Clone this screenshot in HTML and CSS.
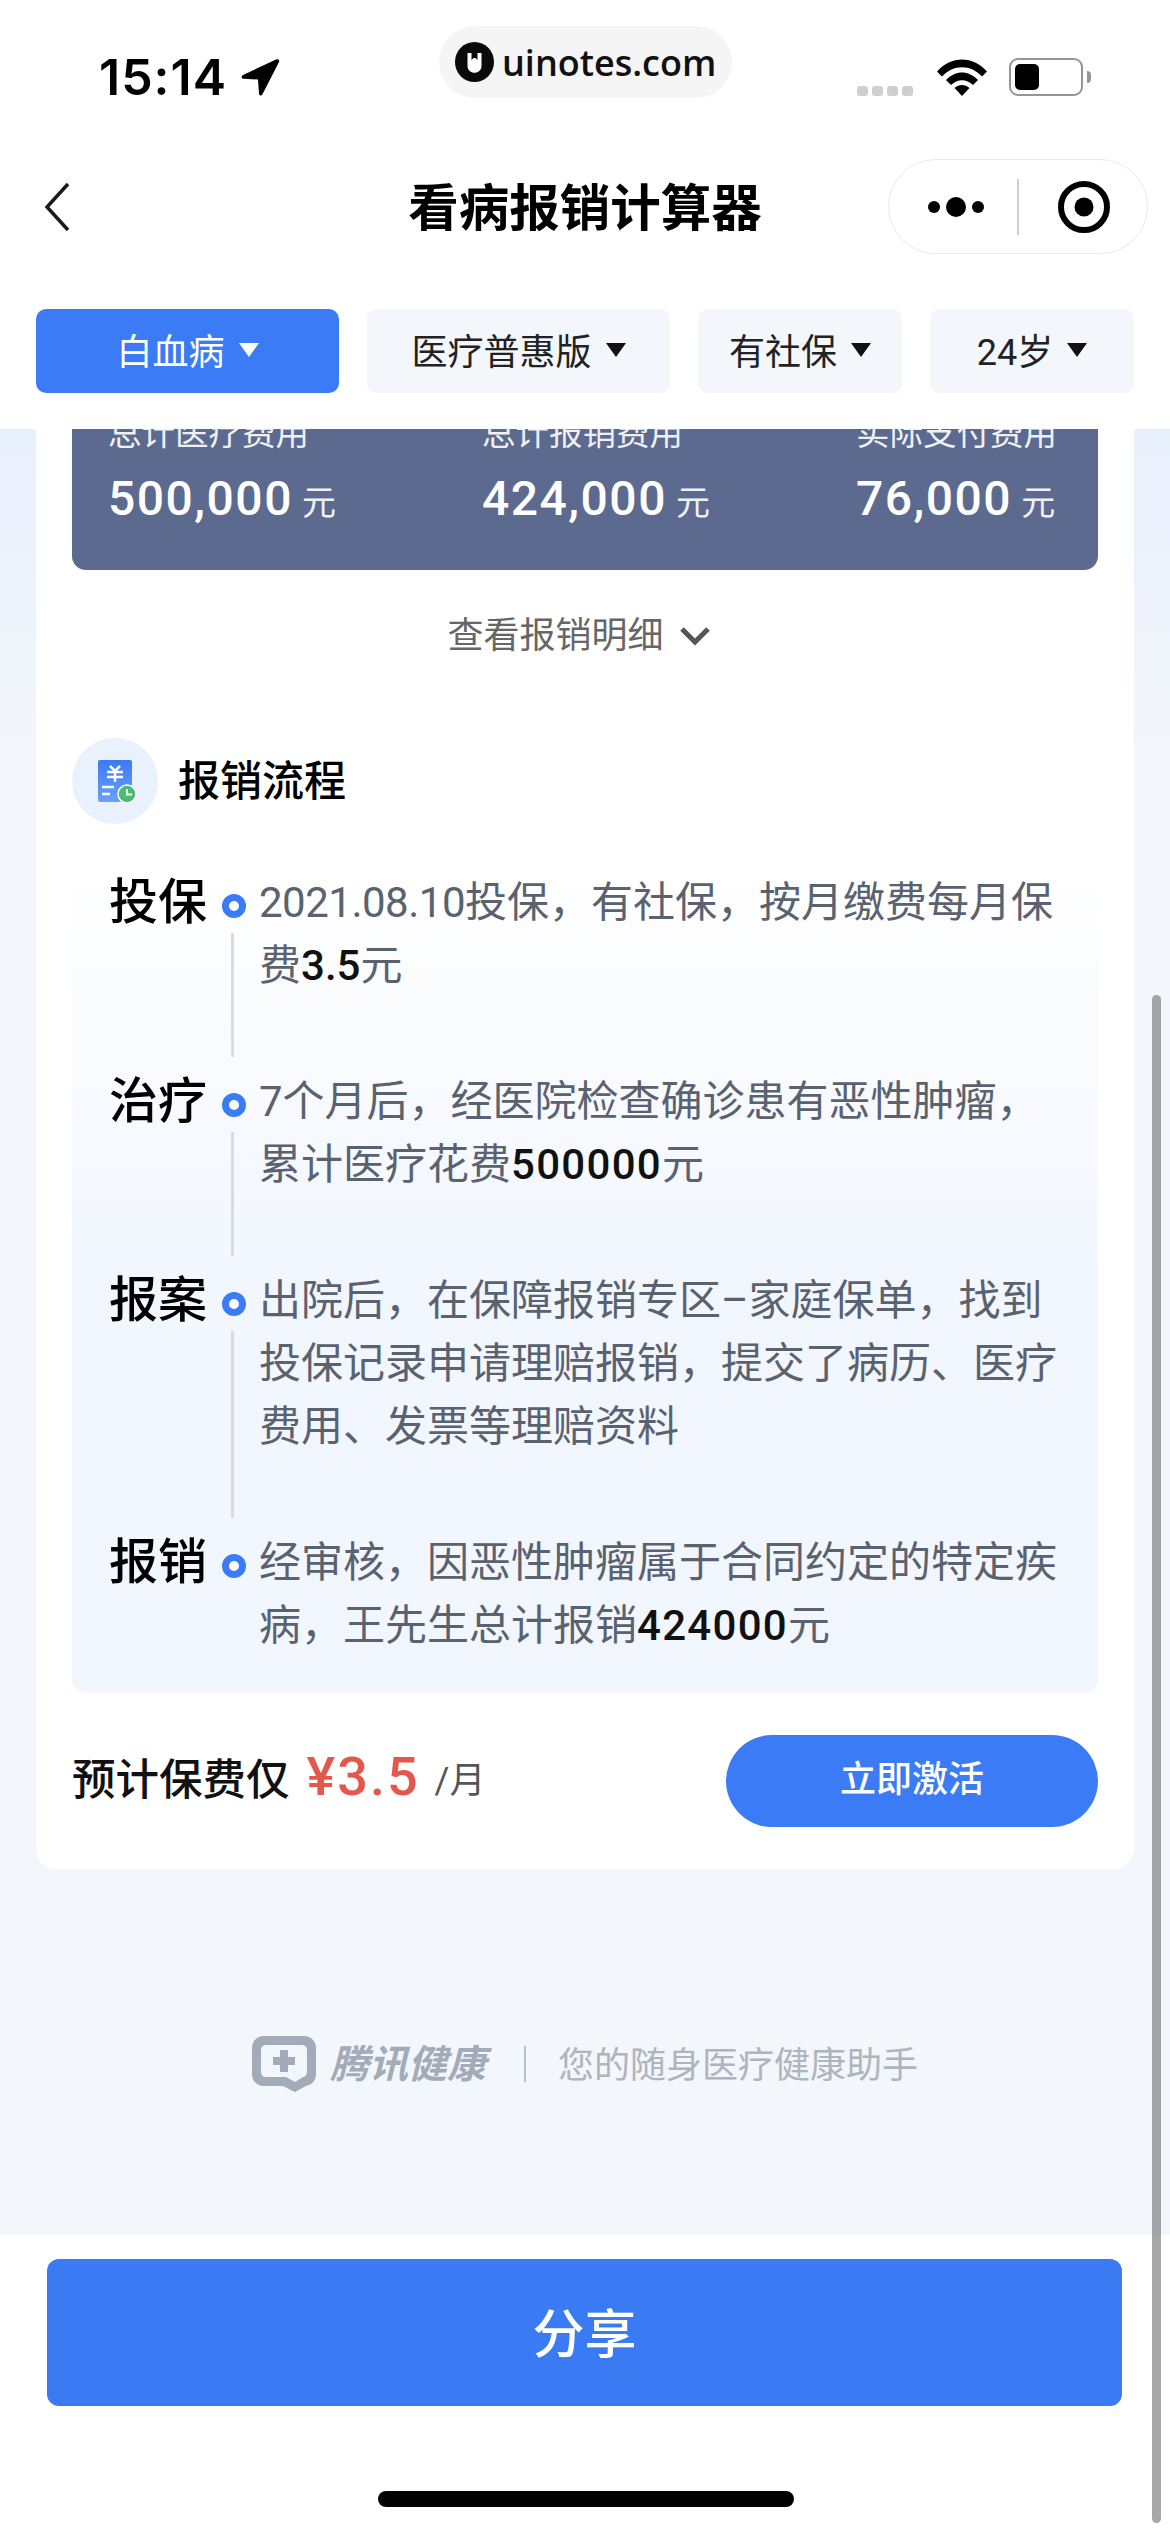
FILE: index.html
```html
<!DOCTYPE html>
<html lang="zh-CN">
<head>
    <meta charset="UTF-8">
    <meta name="viewport" content="width=device-width, initial-scale=1.0">
    <title>看病报销计算器</title>
    <link rel="stylesheet" href="styles.css">
</head>
<body>
<div class="page">

    <!-- Header -->
    <header class="top">
        <div class="status">
            <div class="status-left">
                <span class="time">15:14</span>
                <svg class="arrow" viewBox="0 0 40 38"><path d="M36 1.500 3 17c-2 1-2 3.500 1 3.800l14 .7 1 14c.3 2.500 2.600 2.700 3.500.8L39 4c.8-2-1-3.400-3-2.500z" fill="#000"/></svg>
            </div>
            <div class="status-right">
                <span class="signal"><i></i><i></i><i></i><i></i></span>
                <svg class="wifi" viewBox="0 0 50 37"><path d="M0 12.500C14-3.500 36-3.500 50 12.500l-5 5C34 5 16 5 5 17.500z" fill="#000"/><path d="M9 21c9.500-10 22.500-10 32 0l-5 5c-6.500-6.500-15.500-6.500-22 0z" fill="#000"/><path d="M17.500 29c4.500-4 10.500-4 15 0L25 37z" fill="#000"/></svg>
                <div class="battery"><div class="battery-level"></div></div>
                <div class="battery-cap"></div>
            </div>
        </div>
        <div class="watermark">
            <svg class="wm-logo" viewBox="0 0 39 40"><ellipse cx="19.500" cy="20" rx="19.500" ry="20" fill="#0a0a0a"/><path d="M12.500 11v13c0 9 14 9 14 0V11h-4v7l-2-2h-2l-2 2v-7z" fill="#fff"/></svg>
            <span class="wm-text">uinotes.com</span>
        </div>
        <nav class="nav">
            <svg class="back" viewBox="0 0 28 50"><path d="M25 2 4 25l21 23" fill="none" stroke="#1a1a1a" stroke-width="3.500"/></svg>
            <h1 class="title">看病报销计算器</h1>
            <div class="capsule">
                <svg class="more-dots" viewBox="0 0 62 24"><circle cx="6" cy="12" r="6"/><circle cx="28" cy="12" r="10"/><circle cx="50" cy="12" r="6"/></svg>
                <span class="capsule-line"></span>
                <svg class="target" viewBox="0 0 52 52"><circle cx="26" cy="26" r="23" fill="none" stroke="#000" stroke-width="6"/><circle cx="26" cy="26" r="9.500"/></svg>
            </div>
        </nav>
        <div class="filters">
            <div class="filter filter-active filter-lg"><span class="filter-text">白血病</span><span class="tri"></span></div>
            <div class="filter filter-lg"><span class="filter-text">医疗普惠版</span><span class="tri"></span></div>
            <div class="filter filter-sm"><span class="filter-text">有社保</span><span class="tri"></span></div>
            <div class="filter filter-sm"><span class="filter-text">24岁</span><span class="tri"></span></div>
        </div>
    </header>

    <!-- Scrolled content -->
    <main class="scroll">
        <div class="card">
            <div class="totals">
                <div class="total">
                    <div class="total-label">总计医疗费用</div>
                    <div class="total-value">500,000<small>元</small></div>
                </div>
                <div class="total">
                    <div class="total-label">总计报销费用</div>
                    <div class="total-value">424,000<small>元</small></div>
                </div>
                <div class="total">
                    <div class="total-label">实际支付费用</div>
                    <div class="total-value">76,000<small>元</small></div>
                </div>
            </div>

            <div class="detail-link">
                查看报销明细
                <svg class="chevron" viewBox="0 0 32 20"><path d="M3 3l13 13L29 3" fill="none" stroke="#555" stroke-width="5"/></svg>
            </div>

            <div class="section-head">
                <div class="section-icon">
                    <svg viewBox="0 0 46 46" width="46" height="46">
                        <defs><linearGradient id="docFill" x1="0" y1="0" x2="0" y2="1"><stop offset="0" stop-color="#3a7af4"/><stop offset="1" stop-color="#6b9ff8"/></linearGradient></defs>
                        <rect x="6" y="2" width="34" height="42" rx="2" fill="url(#docFill)"/>
                        <path d="M18 8l5 5 5-5M15 14h16M15 19h16M23 13v11" fill="none" stroke="#fff" stroke-width="2.500"/>
                        <path d="M10 29h12M10 36h8" stroke="#fff" stroke-width="2.500"/>
                        <circle cx="35" cy="36" r="9" fill="#4cbb74" stroke="#fff" stroke-width="1.500"/>
                        <path d="M35 31v5.500h5" fill="none" stroke="#fff" stroke-width="2"/>
                    </svg>
                </div>
                <h2 class="section-title">报销流程</h2>
            </div>

            <div class="steps">
                <div class="step">
                    <div class="step-label">投保</div>
                    <div class="step-mark"><span class="dot"></span><span class="line"></span></div>
                    <div class="step-text"><span class="date">2021.08.10</span>投保，有社保，按月缴费每月保费<b>3.5</b>元</div>
                </div>
                <div class="step">
                    <div class="step-label">治疗</div>
                    <div class="step-mark"><span class="dot"></span><span class="line"></span></div>
                    <div class="step-text">7个月后，经医院检查确诊患有恶性肿瘤，累计医疗花费<b class="wide">500000</b>元</div>
                </div>
                <div class="step">
                    <div class="step-label">报案</div>
                    <div class="step-mark"><span class="dot"></span><span class="line"></span></div>
                    <div class="step-text">出院后，在保障报销专区–家庭保单，找到投保记录申请理赔报销，提交了病历、医疗费用、发票等理赔资料</div>
                </div>
                <div class="step step-last">
                    <div class="step-label">报销</div>
                    <div class="step-mark"><span class="dot"></span></div>
                    <div class="step-text">经审核，因恶性肿瘤属于合同约定的特定疾病，王先生总计报销<b class="wide">424000</b>元</div>
                </div>
            </div>

            <div class="price-row">
                <div class="price">
                    <span class="price-label">预计保费仅</span>
                    <span class="price-num">¥3.5</span>
                    <span class="price-unit">/月</span>
                </div>
                <div class="activate">立即激活</div>
            </div>
        </div>

        <div class="brand">
            <svg class="brand-logo" viewBox="0 0 64 56">
                <path d="M12 0h40c7 0 12 5 12 12v26c0 7-5 12-12 12H54L43 56l-12-6H12C5 50 0 45 0 38V12C0 5 5 0 12 0zM14 9c-3 0-5 2-5 5v22c0 3 2 5 5 5h20l9 5 8-5h-1c3 0 5-2 5-5V14c0-3-2-5-5-5z" fill="#a3abb8" fill-rule="evenodd"/>
                <path d="M28 14h8v7h7v8h-7v7h-8v-7h-7v-8h7z" fill="#a3abb8"/>
            </svg>
            <span class="brand-name">腾讯健康</span>
            <span class="brand-line"></span>
            <span class="brand-slogan">您的随身医疗健康助手</span>
        </div>
    </main>

    <!-- Bottom bar -->
    <footer class="bottom">
        <div class="share">分享</div>
        <div class="home-bar"></div>
    </footer>

    <div class="scrollbar"></div>
</div>
</body>
</html>
```

FILE: styles.css
```css
* {
    box-sizing: border-box;
}
body {
    margin: 0;
    font-family: Roboto, "Noto Sans CJK SC", sans-serif;
    background-color: #fff;
}
h1, h2 {
    margin: 0;
}
.page {
    position: relative;
    width: 1170px;
    height: 2532px;
    display: flex;
    flex-direction: column;
    overflow: hidden;
}
.scrollbar {
    position: absolute;
    left: 1152px;
    top: 995px;
    width: 9px;
    height: 1528px;
    background-color: rgba(120, 120, 120, 0.65);
    border-radius: 5px;
}

/* header */
.top {
    position: relative;
    height: 429px;
    flex: none;
    background-color: #fff;
}
.status {
    display: flex;
    justify-content: space-between;
    align-items: center;
    height: 96px;
    padding: 58px 79px 0 99px;
}
.status-left {
    display: flex;
    align-items: center;
    gap: 13px;
}
.time {
    font-family: Inter, sans-serif;
    font-size: 50px;
    font-weight: 600;
    letter-spacing: 1px;
    line-height: 38px;
    color: #000;
}
.arrow {
    width: 40px;
    height: 38px;
}
.status-right {
    display: flex;
    align-items: center;
}
.signal {
    display: flex;
    gap: 4px;
    margin: 28px 24px 0 0;
}
.signal i {
    display: block;
    width: 11px;
    height: 10px;
    border-radius: 3px;
    background-color: #cfcfcf;
}
.wifi {
    width: 50px;
    height: 37px;
    margin-right: 22px;
}
.battery {
    width: 74px;
    height: 38px;
    padding: 4px;
    border: 2.500px solid #959595;
    border-radius: 9px;
}
.battery-level {
    width: 24px;
    height: 100%;
    background-color: #000;
    border-radius: 5px;
}
.battery-cap {
    width: 4px;
    height: 12px;
    margin-left: 4px;
    background-color: #959595;
    border-radius: 0 4px 4px 0;
}
.watermark {
    position: absolute;
    left: 439px;
    top: 26px;
    width: 293px;
    height: 72px;
    display: flex;
    align-items: center;
    gap: 8px;
    padding-left: 16px;
    background-color: #f5f5f5;
    border-radius: 36px;
}
.wm-logo {
    width: 39px;
    height: 40px;
}
.wm-text {
    font-family: "Open Sans", sans-serif;
    font-size: 36px;
    font-weight: 600;
    color: #111;
}
.nav {
    display: grid;
    grid-template-columns: 1fr auto 1fr;
    align-items: center;
    height: 95px;
    margin-top: 63px;
}
.back {
    width: 28px;
    height: 50px;
    margin-left: 43px;
}
.title {
    padding-top: 4px;
    font-size: 50.500px;
    font-weight: 700;
    line-height: 91px;
    color: #000;
}
.capsule {
    justify-self: end;
    display: flex;
    align-items: center;
    width: 260px;
    height: 95px;
    margin-right: 22px;
    border: 1.500px solid #e9e9e9;
    border-radius: 48px;
}
.more-dots {
    width: 62px;
    height: 24px;
    margin-left: 39px;
}
.capsule-line {
    width: 2px;
    height: 56px;
    margin-left: 27px;
    background-color: #cfcfcf;
}
.target {
    width: 52px;
    height: 52px;
    margin-left: 39px;
}
.filters {
    display: flex;
    justify-content: space-between;
    padding: 0 36px;
    margin-top: 55px;
}
.filter {
    display: flex;
    justify-content: center;
    align-items: center;
    gap: 14px;
    height: 84px;
    font-size: 36px;
    color: #222;
    background-color: #f3f6fa;
    border-radius: 10px;
}
.filter-text {
    margin-bottom: 5px;
}
.filter-lg {
    width: 303px;
}
.filter-sm {
    width: 204px;
}
.filter-active {
    color: #fff;
    background-color: #3b7bf5;
}
.tri {
    width: 0;
    height: 0;
    margin-bottom: 2px;
    border-left: 10px solid transparent;
    border-right: 10px solid transparent;
    border-top: 14px solid #111;
}
.filter-active .tri {
    border-top-color: #fff;
}

/* scrolled part */
.scroll {
    flex: 1;
    overflow: hidden;
    background: linear-gradient(180deg, #e8f0fd 0, #f3f6fb 320px);
}
.card {
    margin: -49px 36px 0;
    padding: 0 36px 42px;
    background-color: #fff;
    border-radius: 0 0 20px 20px;
}
.totals {
    display: grid;
    grid-template-columns: repeat(3, 204px);
    column-gap: 170px;
    height: 190px;
    padding: 32px 0 0 36px;
    background-color: #5c6a90;
    border-radius: 0 0 14px 14px;
    color: #fff;
}
.total-label {
    font-size: 33.500px;
    line-height: 44px;
    white-space: nowrap;
    opacity: 0.9;
}
.total-value {
    margin-top: 13px;
    font-size: 48px;
    font-weight: 500;
    line-height: 60px;
    letter-spacing: 1.500px;
    white-space: nowrap;
}
.total-value small {
    margin-left: 9px;
    font-size: 34px;
    font-weight: 400;
    letter-spacing: 0;
    opacity: 0.9;
}
.detail-link {
    display: flex;
    justify-content: center;
    align-items: center;
    gap: 15px;
    padding: 44px 12px 0 0;
    font-size: 36px;
    line-height: 44px;
    color: #666;
}
.chevron {
    width: 32px;
    height: 20px;
}
.section-head {
    display: flex;
    align-items: center;
    gap: 20px;
    margin-top: 80px;
}
.section-icon {
    display: flex;
    justify-content: center;
    align-items: center;
    width: 86px;
    height: 86px;
    background-color: #e9f1fd;
    border-radius: 50%;
}
.section-title {
    margin-bottom: 8px;
    font-size: 42px;
    font-weight: 500;
    color: #000;
}
.steps {
    margin-top: 36px;
    padding: 11px 36px 0 37px;
    background: linear-gradient(180deg, #fff 0, #f2f6fe 50%, #f2f6fe 100%);
    border-radius: 0 0 14px 14px;
}
.step {
    display: flex;
}
.step-label {
    flex: none;
    width: 97px;
    font-size: 49px;
    font-weight: 500;
    line-height: 63px;
    white-space: nowrap;
    color: #000;
}
.step-mark {
    flex: none;
    display: flex;
    flex-direction: column;
    align-items: center;
    width: 24px;
    margin: 23px 13px 13px 16px;
}
.dot {
    flex: none;
    width: 24px;
    height: 24px;
    border: 7px solid #3b7bf5;
    border-radius: 50%;
    background-color: #fff;
}
.line {
    flex: 1;
    width: 3px;
    margin: 15px 3px 0 0;
    background-color: #d7dbe3;
}
.step-text {
    flex: 1;
    padding-bottom: 73px;
    font-size: 42px;
    line-height: 63px;
    color: #5a6270;
}
.date {
    letter-spacing: -0.500px;
}
.step-text b {
    font-weight: 500;
    color: #111;
}
.step-text b.wide {
    letter-spacing: 1.300px;
}
.step-last .step-text {
    padding-bottom: 36px;
}
.price-row {
    display: flex;
    justify-content: space-between;
    align-items: center;
    margin-top: 42px;
}
.price {
    display: flex;
    align-items: center;
    padding-bottom: 9px;
}
.price-label {
    font-size: 43.500px;
    font-weight: 500;
    color: #111;
}
.price-num {
    margin-left: 17px;
    font-size: 54px;
    font-weight: 500;
    letter-spacing: 2px;
    color: #e4574c;
}
.price-unit {
    margin-left: 15px;
    font-size: 36px;
    color: #555;
}
.activate {
    width: 372px;
    height: 92px;
    font-size: 36px;
    font-weight: 500;
    line-height: 90px;
    text-align: center;
    color: #fff;
    background-color: #3b7bf5;
    border-radius: 46px;
}
.brand {
    display: flex;
    align-items: center;
    height: 56px;
    margin: 167px 0 0 252px;
}
.brand-logo {
    width: 64px;
    height: 56px;
}
.brand-name {
    margin: 0 0 6px 14px;
    font-size: 39px;
    font-weight: 700;
    font-style: italic;
    color: #a3abb8;
}
.brand-line {
    width: 2px;
    height: 36px;
    margin-left: 38px;
    background-color: #b8bec9;
}
.brand-slogan {
    margin: 0 0 4px 32px;
    font-size: 36px;
    color: #aeb4c0;
}

/* bottom bar */
.bottom {
    position: relative;
    flex: none;
    height: 297px;
    padding: 24px 48px 0 47px;
    background-color: #fff;
}
.share {
    height: 147px;
    font-size: 52px;
    font-weight: 500;
    line-height: 153px;
    text-align: center;
    color: #fff;
    background-color: #3a7bf3;
    border-radius: 12px;
}
.home-bar {
    position: absolute;
    left: 378px;
    bottom: 25px;
    width: 416px;
    height: 16px;
    background-color: #000;
    border-radius: 8px;
}
```
